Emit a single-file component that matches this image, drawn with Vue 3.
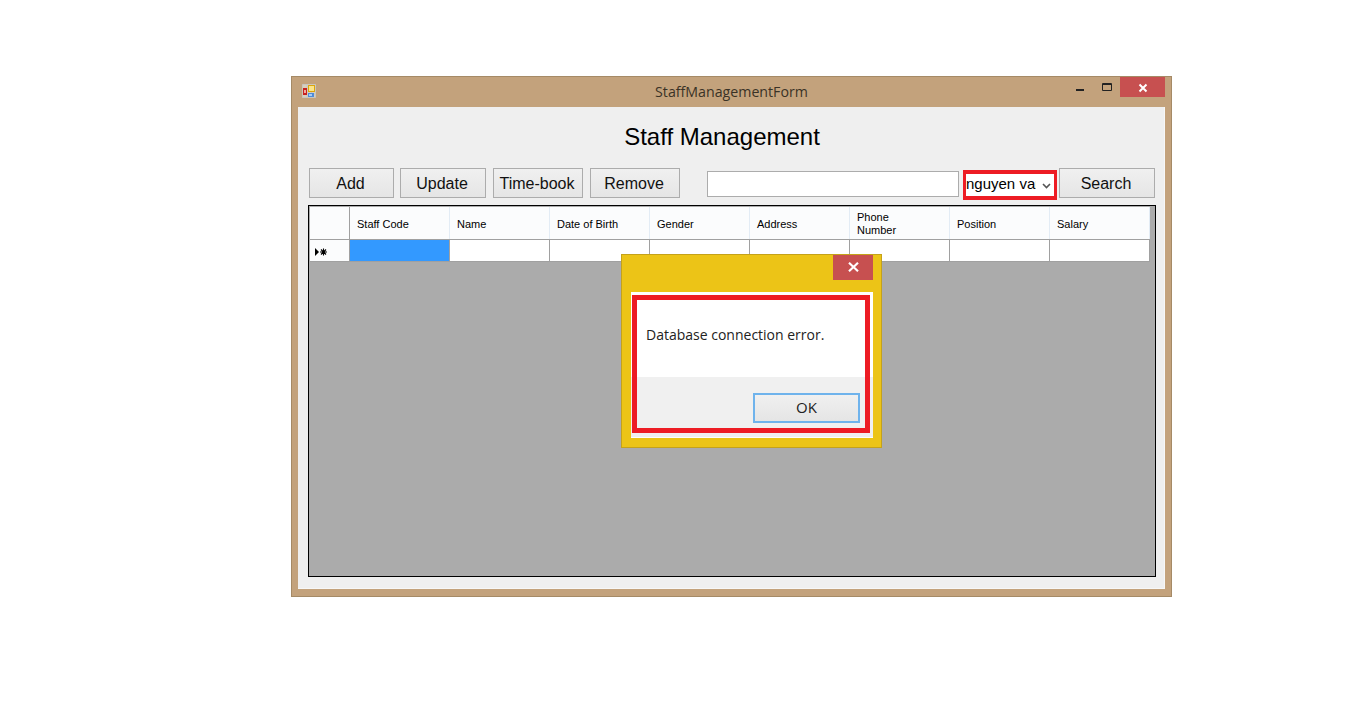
<template>
  <div class="page">
    <div class="window">
      <!-- 标题栏 -->
      <div class="titlebar">
        <svg class="app-icon" width="14" height="14" viewBox="0 0 14 14">
          <path d="M.5.5h13v13H.5z M.5 5h13 M.5 10h13 M5 .5v13 M9.500 .5v13" fill="#d9cfbd" stroke="#c8c6c0" />
          <rect x="1" y="4" width="4" height="7" fill="#c8221e" />
          <rect x="2" y="6" width="2" height="3" fill="#f3a8a0" />
          <rect x="6" y="1" width="7" height="7" fill="#dca50c" />
          <rect x="7" y="2" width="5" height="5" fill="#fbe48a" />
          <rect x="6" y="9" width="6" height="4" fill="#4f8bd8" />
          <rect x="7" y="10" width="3" height="2" fill="#a8cdf5" />
        </svg>
        <span class="window-title">StaffManagementForm</span>
        <div class="controls">
          <svg class="ctl ctl-min" width="10" height="10" viewBox="0 0 10 10"><rect x="1" y="7" width="8" height="2" fill="#222" /></svg>
          <svg class="ctl ctl-max" width="10" height="8" viewBox="0 0 10 8"><path d="M.5.5h9v7h-9z M.5 1.500h9" fill="none" stroke="#222" /></svg>
          <div class="close-btn wide">
            <svg width="10" height="10" viewBox="0 0 10 10"><path d="M1.500 1.500l7 7M8.500 1.500l-7 7" stroke="#fff" stroke-width="2" /></svg>
          </div>
        </div>
      </div>

      <div class="client">
        <h1 class="heading">Staff Management</h1>

        <!-- 工具栏 -->
        <div class="toolbar">
          <button class="btn btn-add">Add</button>
          <button class="btn btn-update">Update</button>
          <button class="btn btn-time">Time-book</button>
          <button class="btn btn-remove">Remove</button>
          <input class="search-input" type="text" />
          <div class="combo">
            <span class="combo-text">nguyen van a</span>
            <svg class="combo-arrow" width="9" height="6" viewBox="0 0 9 6"><path d="M1 1l3.500 3.500L8 1" fill="none" stroke="#555" stroke-width="1.6" /></svg>
          </div>
          <button class="btn btn-search">Search</button>
        </div>

        <!-- 数据表 -->
        <div class="grid">
          <div class="row head">
            <div class="row-head"></div>
            <div v-for="col in columns" :key="col" class="cell">{{ col }}</div>
          </div>
          <div class="row data">
            <div class="row-head marker">
              <svg width="13" height="8" viewBox="0 0 13 8">
                <path d="M0 0l4 4-4 4z" fill="#000" />
                <path d="M8.500 .5v7M5 4h7M6 1.500l5 5M11 1.500l-5 5" stroke="#000" stroke-width="1.100" />
              </svg>
            </div>
            <div
              v-for="(col, i) in columns"
              :key="col"
              class="cell"
              :class="{ current: i === 0 }"
            ></div>
          </div>
        </div>
      </div>

      <!-- 错误对话框 -->
      <div class="dialog">
        <div class="dialog-top">
          <div class="close-btn small">
            <svg width="11" height="10" viewBox="0 0 11 10"><path d="M1 .8l9 8.400M10 .8l-9 8.400" stroke="#fff" stroke-width="2.200" /></svg>
          </div>
        </div>
        <div class="dialog-body">
          <div class="message">Database connection error.</div>
          <div class="dialog-actions">
            <button class="ok-btn">OK</button>
          </div>
          <div class="red-mark"></div>
        </div>
      </div>
    </div>
  </div>
</template>

<script setup>
const columns = [
  'Staff Code',
  'Name',
  'Date of Birth',
  'Gender',
  'Address',
  'Phone\nNumber',
  'Position',
  'Salary'
]
</script>

<style>
html,
body {
  background: #fff;
}
</style>

<style scoped>
.page {
  padding: 76px 0 0 291px;
  height: 720px;
  box-sizing: border-box;
  font-family: "Liberation Sans", Arial, sans-serif;
}

/* 窗口 */
.window {
  position: relative;
  width: 881px;
  height: 521px;
  box-sizing: border-box;
  background: #c3a27c;
  border: 1px solid #a58a66;
  display: flex;
  flex-direction: column;
}

.titlebar {
  height: 30px;
  flex: none;
  display: flex;
  align-items: flex-start;
  padding: 0 6px 0 10px;
  position: relative;
}

.app-icon {
  margin-top: 7px;
}

.window-title {
  position: absolute;
  left: 0;
  right: 0;
  top: 5px;
  text-align: center;
  font-family: "Open Sans", sans-serif;
  font-size: 14.2px;
  line-height: 19px;
  color: #3a3226;
}

.controls {
  margin-left: auto;
  display: flex;
  align-items: flex-start;
}

.ctl {
  margin-top: 6px;
}

.ctl-min {
  margin-top: 5px;
  margin-right: 17px;
}

.ctl-max {
  margin-right: 8px;
}

.close-btn {
  width: 40px;
  height: 25px;
  box-sizing: border-box;
  background: #c75050;
  display: flex;
  align-items: center;
  justify-content: center;
}

.close-btn.wide {
  width: 45px;
  height: 20px;
  padding-top: 1px;
}

.close-btn.small {
  padding-bottom: 2px;
}

.client {
  flex: 1;
  margin: 0 6px 7px;
  background: #efefef;
  border-right: 1px solid #f7f7f7;
  border-bottom: 1px solid #f7f7f7;
  display: flex;
  flex-direction: column;
  min-height: 0;
}

.heading {
  margin: 0;
  height: 61px;
  flex: none;
  box-sizing: border-box;
  padding-right: 18px;
  text-align: center;
  font-size: 24px;
  font-weight: 400;
  line-height: 60px;
  color: #000;
}

/* 工具栏 */
.toolbar {
  height: 30px;
  flex: none;
  display: flex;
  align-items: center;
  padding-left: 11px;
}

.btn {
  height: 30px;
  padding: 2px 2px 0 0;
  box-sizing: border-box;
  background: linear-gradient(#f0f0f0, #e5e5e5);
  border: 1px solid #acacac;
  border-radius: 0;
  font-family: inherit;
  font-size: 16px;
  color: #111;
}

.btn-add {
  width: 85px;
  margin-right: 6px;
}

.btn-update {
  width: 86px;
  margin-right: 7px;
}

.btn-time {
  width: 90px;
  margin-right: 7px;
}

.btn-remove {
  width: 90px;
  margin-right: 27px;
}

.btn-search {
  width: 96px;
}

.search-input {
  width: 252px;
  height: 26px;
  box-sizing: border-box;
  margin: 2px 4px 0 0;
  border: 1px solid #acacac;
  background: #fff;
  outline: none;
}

.combo {
  width: 94px;
  height: 30px;
  margin: 4px 2px 0 0;
  box-sizing: border-box;
  border: solid #ed1c24;
  border-width: 4px 3px;
  background: #fff;
  display: flex;
  align-items: center;
  font-size: 15px;
  color: #000;
}

.combo-text {
  width: 70px;
  margin: 0 6px 3px 0;
  overflow: hidden;
  white-space: nowrap;
}

.combo-arrow {
  margin-top: 1px;
}

/* 表格 */
.grid {
  width: 848px;
  height: 372px;
  flex: none;
  box-sizing: border-box;
  margin: 7px 0 0 10px;
  padding: 1px 0 0 1px;
  background: #ababab;
  border: 1px solid #000;
}

.row {
  display: flex;
}

.row-head {
  width: 40px;
  flex: none;
  box-sizing: border-box;
  border-right: 1px solid #a0a0a0;
}

.cell {
  width: 100px;
  flex: none;
  box-sizing: border-box;
  padding: 0 8px 0 7px;
  display: flex;
  align-items: center;
}

.head {
  height: 33px;
  background: #fbfcfd;
  border-bottom: 1px solid #a0a0a0;
  width: 840px;
  box-sizing: border-box;
  font-size: 11px;
  line-height: 13px;
  color: #000;
}

.head .cell {
  padding-top: 2px;
  white-space: pre-line;
  border-right: 1px solid #e3ecf5;
}

.data {
  height: 22px;
  width: 840px;
  box-sizing: border-box;
  background: #fff;
  border-bottom: 1px solid #a0a0a0;
}

.data .cell {
  border-right: 1px solid #a0a0a0;
}

.data .current {
  background: #3399ff;
}

.marker {
  display: flex;
  align-items: center;
  padding: 2px 0 0 5px;
  background: #fbfcfd;
}

/* 对话框 */
.dialog {
  position: absolute;
  left: 329px;
  top: 177px;
  width: 261px;
  height: 194px;
  box-sizing: border-box;
  background: #ecc417;
  border: 1px solid #c5a21a;
  display: flex;
  flex-direction: column;
}

.dialog-top {
  height: 37px;
  flex: none;
  display: flex;
  justify-content: flex-end;
  padding-right: 8px;
}

.dialog-body {
  position: relative;
  width: 242px;
  height: 146px;
  margin-left: 9px;
  background: #fff;
  display: flex;
  flex-direction: column;
}

.message {
  height: 85px;
  flex: none;
  box-sizing: border-box;
  padding: 33px 0 0 15px;
  font-family: "Open Sans", sans-serif;
  font-size: 14px;
  line-height: 20px;
  color: #222;
}

.dialog-actions {
  flex: 1;
  margin-bottom: 1px;
  background: #f0f0f0;
  display: flex;
  justify-content: flex-end;
  padding: 16px 13px 0 0;
}

.ok-btn {
  width: 107px;
  height: 30px;
  padding: 0 0 2px;
  box-sizing: border-box;
  background: linear-gradient(#f0f0f0, #e5e5e5);
  border: 2px solid #6fb3ec;
  border-radius: 0;
  font-family: "Open Sans", sans-serif;
  font-size: 15px;
  color: #222;
}

/* 红色标注框 */
.red-mark {
  position: absolute;
  left: 1px;
  top: 3px;
  width: 238px;
  height: 138px;
  box-sizing: border-box;
  border: 5px solid #ed1c24;
  pointer-events: none;
}
</style>
